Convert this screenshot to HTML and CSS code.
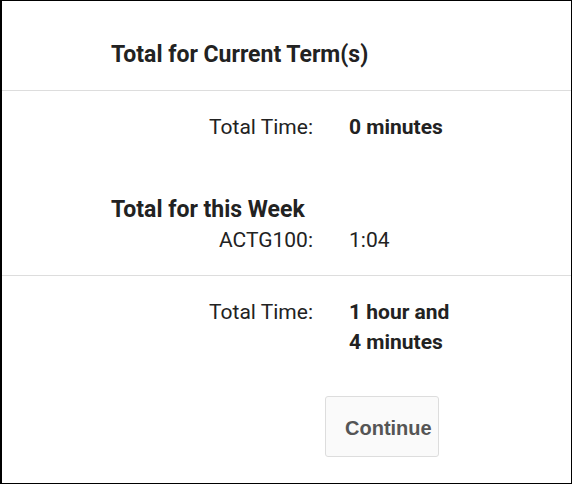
FILE: index.html
```html
<!DOCTYPE html>
<html>
<head>
    <title>Time Summary</title>
    <link rel="stylesheet" href="styles.css">
</head>
<body>
    <div class="panel">
        <div class="panel-head">
            <h2>Total for Current Term(s)</h2>
        </div>

        <div class="panel-body">
            <div class="row">
                <span class="label">Total Time:</span>
                <span class="value strong">0 minutes</span>
            </div>

            <h2 class="week-title">Total for this Week</h2>
            <div class="row">
                <span class="label">ACTG100:</span>
                <span class="value">1:04</span>
            </div>
        </div>

        <div class="panel-body total">
            <div class="row">
                <span class="label">Total Time:</span>
                <span class="value strong">1 hour and 4 minutes</span>
            </div>
        </div>

        <div class="actions">
            <button class="button">Continue</button>
        </div>
    </div>
</body>
</html>
```

FILE: styles.css
```css
* {
    box-sizing: border-box;
    margin: 0;
    padding: 0;
}

body {
    font-family: Roboto, "Noto Sans", sans-serif;
    color: #222;
    background-color: #fff;
}

.panel {
    width: 572px;
    height: 484px;
    border: 1px solid #000;
    border-left-width: 2px;
    background-color: #fff;
}

h2 {
    font-size: 23px;
    font-weight: bold;
    line-height: 30px;
}

.panel-head {
    padding: 39px 0 20px 109px;
    border-bottom: 1px solid #ddd;
}

.panel-body {
    padding: 21px 0 20px 109px;
}

.panel-body.total {
    border-top: 1px solid #ddd;
    padding-top: 21px;
    padding-bottom: 0;
}

.week-title {
    margin-top: 52px;
    line-height: 31px;
}

.row {
    display: grid;
    grid-template-columns: 202px 112px;
    column-gap: 36px;
    font-size: 21px;
    line-height: 30px;
}

.label {
    text-align: right;
}

.strong {
    font-weight: bold;
}

.actions {
    padding: 39px 0 0 323px;
}

.button {
    width: 114px;
    height: 61px;
    padding: 3px 0 0 19px;
    text-align: left;
    font-family: "Liberation Sans", Arial, sans-serif;
    font-size: 20px;
    font-weight: bold;
    color: #555;
    background-color: #fafafa;
    border: 1px solid #ddd;
    border-radius: 3px;
    cursor: pointer;
}
```
